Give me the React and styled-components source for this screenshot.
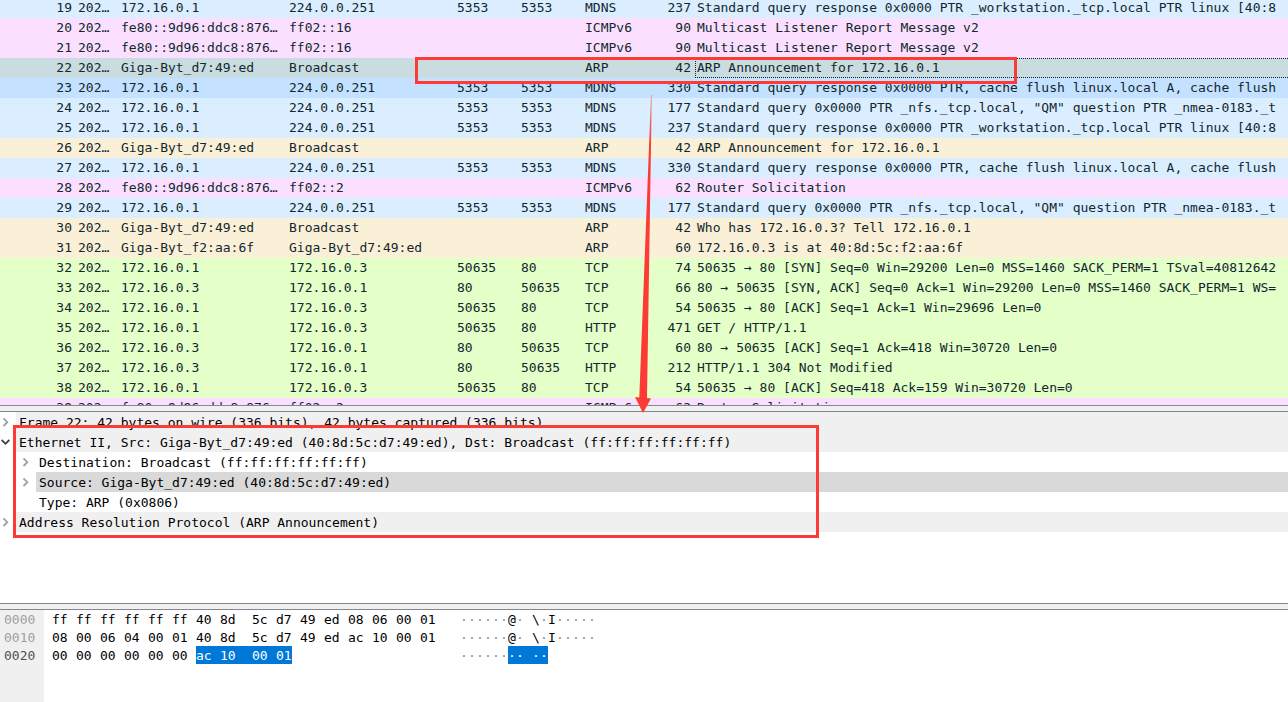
import React from "react";
import styled, { createGlobalStyle } from "styled-components";

const GlobalStyle = createGlobalStyle`
  * { box-sizing: border-box; }
  body {
    margin: 0;
    background: #ffffff;
    font-family: "DejaVu Sans Mono", "Liberation Mono", monospace;
    font-size: 13px;
  }
`;

const rowColors = {
  mdns: "#daeeff",
  icmp: "#fae0fe",
  arp: "#faf0d7",
  tcp: "#e4ffc7",
  selected: "#c9dcdf",
  hover: "#c4e2ff",
};

const Window = styled.main`
  position: relative;
  display: grid;
  grid-template-columns: minmax(0, 1fr);
  grid-template-rows: 405fr 7px 191fr 7px 92fr;
  height: 100vh;
  overflow: hidden;
`;

const Pane = styled.section`
  min-height: 0;
  overflow: hidden;
  background: #ffffff;
`;

const Splitter = styled.div`
  background: #f0f0f0;
  border-top: 1px solid #828790;
  border-bottom: 1px solid #828790;
`;

/* The list is scrolled by two pixels, so its first row is cut at the top. */
const PacketTable = styled.table`
  width: 100%;
  margin-top: -2px;
  table-layout: fixed;
  border-collapse: separate;
  border-spacing: 0;
  color: #12272e;
`;

const Column = styled.col`
  width: ${(p) => (p.$width ? `${p.$width}px` : "auto")};
`;

const PacketRow = styled.tr`
  height: 20px;
  background: ${(p) => rowColors[p.$kind]};
`;

const Cell = styled.td`
  height: 20px;
  padding: 0 0 0 ${(p) => (p.$right ? 0 : 2)}px;
  line-height: 20px;
  text-align: ${(p) => (p.$right ? "right" : "left")};
  white-space: pre;
  overflow: hidden;
`;

const TimeCell = styled(Cell)`
  padding-left: 6px;
`;

const InfoCell = styled(Cell)`
  ${(p) =>
    p.$focused &&
    `
    padding-left: 1px;
    line-height: 18px;
    border: 1px dotted #12272e;
    border-right: 0;
  `}
`;

const Tree = styled.ul`
  margin: 0;
  padding: 0;
  list-style: none;
  color: #000000;
`;

const TreeRow = styled.li`
  display: flex;
  height: 20px;
  padding-left: ${(p) => p.$level * 20}px;
`;

const Toggle = styled.button`
  display: flex;
  align-items: center;
  width: 16px;
  padding: 0 0 0 1px;
  border: 0;
  background: none;
`;

const TogglePlace = styled.span`
  width: 16px;
`;

const TreeText = styled.span`
  flex: 1;
  padding-left: 3px;
  line-height: 22px;
  white-space: pre;
  background: ${(p) => p.$fill || "transparent"};
`;

const BytesPane = styled(Pane)`
  display: flex;
  line-height: 20px;
  white-space: pre;
  color: #000000;
`;

const Offsets = styled.div`
  width: 44px;
  padding-left: 4px;
  background: #f0f0f0;
`;

const Line = styled.div`
  display: flex;
  height: 18px;
  color: ${(p) => (p.$tone === "dim" ? "#a0a0a0" : p.$tone === "strong" ? "#505050" : "inherit")};
`;

const HexColumn = styled.div`
  width: 408px;
  padding-left: 8px;
`;

const AsciiColumn = styled.div`
  padding-left: 8px;
`;

/* One byte in hex: two digits and a blank; the eighth has a second blank. */
const HexByte = styled.span`
  width: ${(p) => (p.$last ? 16 : p.$groupEnd ? 32 : 24)}px;
  height: 18px;
  background: ${(p) => (p.$marked ? "#0078d7" : "transparent")};
  color: ${(p) => (p.$marked ? "#ffffff" : "inherit")};
`;

const AsciiChar = styled.span`
  width: 8px;
  height: 18px;
  background: ${(p) => (p.$marked ? "#0078d7" : "transparent")};
  color: ${(p) => (p.$marked ? "#ffffff" : p.$dim ? "#8c8c8c" : "inherit")};
`;

const Frame = styled.div`
  position: absolute;
  left: ${(p) => p.$x}px;
  top: ${(p) => p.$y}px;
  width: ${(p) => p.$w}px;
  height: ${(p) => p.$h}px;
  border: 3px solid #fc3a36;
  pointer-events: none;
`;

const ArrowDrawing = styled.svg`
  position: absolute;
  left: 634px;
  top: 94px;
  pointer-events: none;
`;

const packets = [
  [19, "172.16.0.1", "224.0.0.251", "5353", "5353", "MDNS", 237, "Standard query response 0x0000 PTR _workstation._tcp.local PTR linux [40:8", "mdns"],
  [20, "fe80::9d96:ddc8:876…", "ff02::16", "", "", "ICMPv6", 90, "Multicast Listener Report Message v2", "icmp"],
  [21, "fe80::9d96:ddc8:876…", "ff02::16", "", "", "ICMPv6", 90, "Multicast Listener Report Message v2", "icmp"],
  [22, "Giga-Byt_d7:49:ed", "Broadcast", "", "", "ARP", 42, "ARP Announcement for 172.16.0.1", "selected"],
  [23, "172.16.0.1", "224.0.0.251", "5353", "5353", "MDNS", 330, "Standard query response 0x0000 PTR, cache flush linux.local A, cache flush", "hover"],
  [24, "172.16.0.1", "224.0.0.251", "5353", "5353", "MDNS", 177, "Standard query 0x0000 PTR _nfs._tcp.local, \"QM\" question PTR _nmea-0183._t", "mdns"],
  [25, "172.16.0.1", "224.0.0.251", "5353", "5353", "MDNS", 237, "Standard query response 0x0000 PTR _workstation._tcp.local PTR linux [40:8", "mdns"],
  [26, "Giga-Byt_d7:49:ed", "Broadcast", "", "", "ARP", 42, "ARP Announcement for 172.16.0.1", "arp"],
  [27, "172.16.0.1", "224.0.0.251", "5353", "5353", "MDNS", 330, "Standard query response 0x0000 PTR, cache flush linux.local A, cache flush", "mdns"],
  [28, "fe80::9d96:ddc8:876…", "ff02::2", "", "", "ICMPv6", 62, "Router Solicitation", "icmp"],
  [29, "172.16.0.1", "224.0.0.251", "5353", "5353", "MDNS", 177, "Standard query 0x0000 PTR _nfs._tcp.local, \"QM\" question PTR _nmea-0183._t", "mdns"],
  [30, "Giga-Byt_d7:49:ed", "Broadcast", "", "", "ARP", 42, "Who has 172.16.0.3? Tell 172.16.0.1", "arp"],
  [31, "Giga-Byt_f2:aa:6f", "Giga-Byt_d7:49:ed", "", "", "ARP", 60, "172.16.0.3 is at 40:8d:5c:f2:aa:6f", "arp"],
  [32, "172.16.0.1", "172.16.0.3", "50635", "80", "TCP", 74, "50635 → 80 [SYN] Seq=0 Win=29200 Len=0 MSS=1460 SACK_PERM=1 TSval=40812642", "tcp"],
  [33, "172.16.0.3", "172.16.0.1", "80", "50635", "TCP", 66, "80 → 50635 [SYN, ACK] Seq=0 Ack=1 Win=29200 Len=0 MSS=1460 SACK_PERM=1 WS=", "tcp"],
  [34, "172.16.0.1", "172.16.0.3", "50635", "80", "TCP", 54, "50635 → 80 [ACK] Seq=1 Ack=1 Win=29696 Len=0", "tcp"],
  [35, "172.16.0.1", "172.16.0.3", "50635", "80", "HTTP", 471, "GET / HTTP/1.1", "tcp"],
  [36, "172.16.0.3", "172.16.0.1", "80", "50635", "TCP", 60, "80 → 50635 [ACK] Seq=1 Ack=418 Win=30720 Len=0", "tcp"],
  [37, "172.16.0.3", "172.16.0.1", "80", "50635", "HTTP", 212, "HTTP/1.1 304 Not Modified", "tcp"],
  [38, "172.16.0.1", "172.16.0.3", "50635", "80", "TCP", 54, "50635 → 80 [ACK] Seq=418 Ack=159 Win=30720 Len=0", "tcp"],
  [39, "fe80::9d96:ddc8:876…", "ff02::2", "", "", "ICMPv6", 62, "Router Solicitation", "icmp"],
];

const details = [
  { text: "Frame 22: 42 bytes on wire (336 bits), 42 bytes captured (336 bits)", level: 0, state: "closed", fill: "#f0f0f0" },
  { text: "Ethernet II, Src: Giga-Byt_d7:49:ed (40:8d:5c:d7:49:ed), Dst: Broadcast (ff:ff:ff:ff:ff:ff)", level: 0, state: "open", fill: "#f0f0f0" },
  { text: "Destination: Broadcast (ff:ff:ff:ff:ff:ff)", level: 1, state: "closed" },
  { text: "Source: Giga-Byt_d7:49:ed (40:8d:5c:d7:49:ed)", level: 1, state: "closed", fill: "#d9d9d9" },
  { text: "Type: ARP (0x0806)", level: 1 },
  { text: "Address Resolution Protocol (ARP Announcement)", level: 0, state: "closed", fill: "#f0f0f0" },
];

/* markFrom is the index of the first highlighted byte in the line. */
const byteLines = [
  { hex: "ff ff ff ff ff ff 40 8d 5c d7 49 ed 08 06 00 01", ascii: "······@· \\·I·····", markFrom: 99 },
  { hex: "08 00 06 04 00 01 40 8d 5c d7 49 ed ac 10 00 01", ascii: "······@· \\·I·····", markFrom: 99 },
  { hex: "00 00 00 00 00 00 ac 10 00 01", ascii: "······ ·· ··".replace(" ", ""), markFrom: 6 },
];

function Chevron({ open }) {
  return (
    <svg width="9" height="10" viewBox="0 0 9 10" fill="none" aria-hidden="true">
      {open ? (
        <path d="M0.7 3 L4.5 6.8 L8.3 3" stroke="#404040" strokeWidth="1.8" />
      ) : (
        <path d="M2.5 1.4 L6.3 5.2 L2.5 9" stroke="#a0a0a0" strokeWidth="1.8" />
      )}
    </svg>
  );
}

function PacketList() {
  return (
    <Pane aria-label="Packets">
      <PacketTable>
        <colgroup>
          {[72, 47, 168, 168, 64, 64, 64, 44, 4].map((w, i) => (
            <Column key={i} $width={w} />
          ))}
          <Column />
        </colgroup>
        <tbody>
          {packets.map(([no, src, dst, sport, dport, proto, len, info, kind]) => (
            <PacketRow key={no} $kind={kind}>
              <Cell $right>{no}</Cell>
              <TimeCell>202…</TimeCell>
              <Cell>{src}</Cell>
              <Cell>{dst}</Cell>
              <Cell>{sport}</Cell>
              <Cell>{dport}</Cell>
              <Cell>{proto}</Cell>
              <Cell $right>{len}</Cell>
              <Cell />
              <InfoCell $focused={kind === "selected"}>{info}</InfoCell>
            </PacketRow>
          ))}
        </tbody>
      </PacketTable>
    </Pane>
  );
}

function DetailTree() {
  return (
    <Pane aria-label="Packet details">
      <Tree>
        {details.map((d) => (
          <TreeRow key={d.text} $level={d.level}>
            {d.state ? (
              <Toggle type="button" aria-label={d.text} aria-expanded={d.state === "open"}>
                <Chevron open={d.state === "open"} />
              </Toggle>
            ) : (
              <TogglePlace />
            )}
            <TreeText $fill={d.fill}>{d.text}</TreeText>
          </TreeRow>
        ))}
      </Tree>
    </Pane>
  );
}

function Bytes() {
  return (
    <BytesPane aria-label="Packet bytes">
      <Offsets>
        <Line $tone="dim">0000</Line>
        <Line $tone="dim">0010</Line>
        <Line $tone="strong">0020</Line>
      </Offsets>
      <HexColumn>
        {byteLines.map((line, row) => (
          <Line key={row}>
            {line.hex.split(" ").map((byte, i, all) => (
              <HexByte key={i} $groupEnd={i === 7} $last={i === all.length - 1} $marked={i >= line.markFrom}>
                {byte + " "}
              </HexByte>
            ))}
          </Line>
        ))}
      </HexColumn>
      <AsciiColumn>
        {byteLines.map((line, row) => (
          <Line key={row}>
            {[...line.ascii].map((char, i) => (
              <AsciiChar key={i} $dim={char === "·"} $marked={i >= line.markFrom}>
                {char}
              </AsciiChar>
            ))}
          </Line>
        ))}
      </AsciiColumn>
    </BytesPane>
  );
}

function Annotations() {
  return (
    <>
      <Frame $x={415} $y={57} $w={602} $h={27} />
      <Frame $x={13} $y={425} $w={806} $h={113} />
      <ArrowDrawing width="18" height="320" viewBox="0 0 18 320" aria-hidden="true">
        <defs>
          <linearGradient id="fade" x1="0" y1="0" x2="0" y2="1">
            <stop offset="0" stopColor="#fc3a36" stopOpacity="0.5" />
            <stop offset="0.15" stopColor="#fc3a36" />
          </linearGradient>
        </defs>
        <path d="M17 1 L17.8 1 L13 304 L17 304.5 L9 319 L1 303 L5.3 303.4 Z" fill="url(#fade)" />
      </ArrowDrawing>
    </>
  );
}

export default function App() {
  return (
    <>
      <GlobalStyle />
      <Window>
        <PacketList />
        <Splitter />
        <DetailTree />
        <Splitter />
        <Bytes />
        <Annotations />
      </Window>
    </>
  );
}
